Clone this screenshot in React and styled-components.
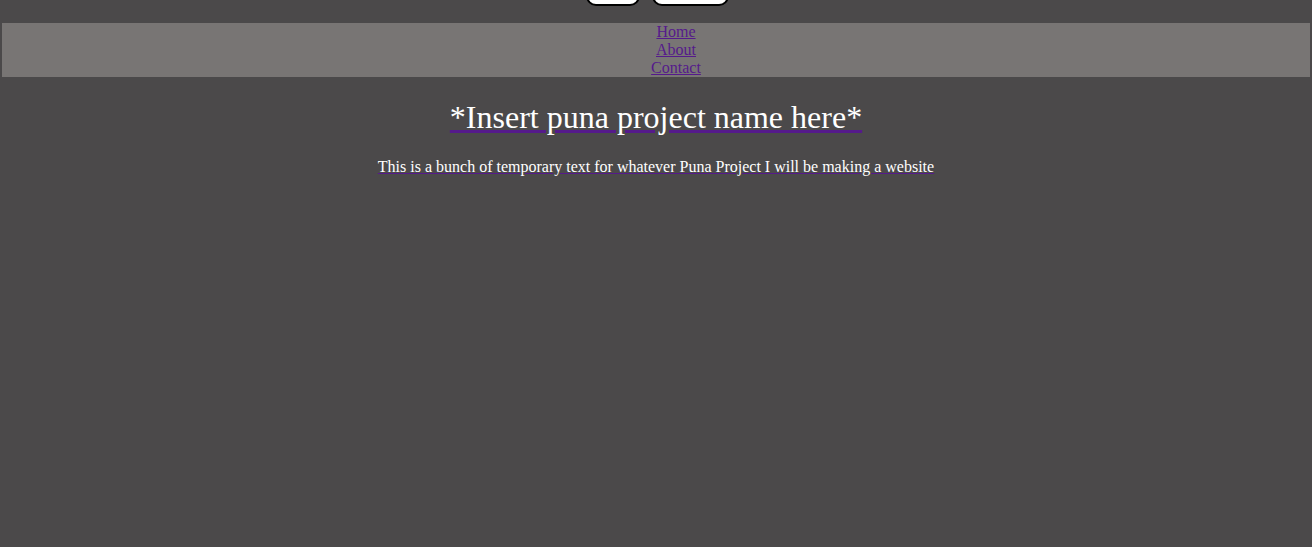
import React from "react";
import styled, { createGlobalStyle } from "styled-components";

const Global = createGlobalStyle`
  html, body { margin: 0; padding: 0; background: #4b494a; }
  body { font-family: "Liberation Serif", "Times New Roman", serif; font-size: 16px; }
`;

const Page = styled.div`
  padding: 0 2px;
  min-height: 547px;
  box-sizing: border-box;
`;

const ButtonRow = styled.div`
  display: flex;
  justify-content: center;
  gap: 12px;
  margin-top: -22px;
  padding-left: 3px;
`;

const TopButton = styled.button`
  width: ${(p) => p.$w}px;
  height: 28px;
  box-sizing: border-box;
  background: #ffffff;
  border: 2px solid #000000;
  border-radius: 10px;
  padding: 0;
`;

const Nav = styled.nav`
  margin-top: 17px;
  background: #787574;
`;

const NavList = styled.ul`
  list-style: none;
  margin: 0;
  padding: 0 0 0 40px;
  display: flex;
  flex-direction: column;
  align-items: center;
`;

const NavItem = styled.li`
  line-height: 18px;
`;

const NavLink = styled.a`
  font-size: 16px;
  color: #551a8b;
  text-decoration: underline;
`;

const Main = styled.a`
  display: block;
  text-align: center;
  color: #551a8b;
  text-decoration: underline;
`;

const Title = styled.h1`
  font-size: 32px;
  font-weight: normal;
  margin: 22px 0 22px;
  line-height: 37px;
  color: #ffffff;
  text-decoration-thickness: 3px;
`;

const Text = styled.p`
  margin: 0;
  font-size: 16px;
  line-height: 18px;
  color: #ffffff;
`;

export default function App() {
  return (
    <>
      <Global />
      <Page>
        <ButtonRow>
          <TopButton $w={54} />
          <TopButton $w={77} />
        </ButtonRow>
        <Nav>
          <NavList>
            <NavItem><NavLink href="#home">Home</NavLink></NavItem>
            <NavItem><NavLink href="#about">About</NavLink></NavItem>
            <NavItem><NavLink href="#contact">Contact</NavLink></NavItem>
          </NavList>
        </Nav>
        <Main href="#">
          <Title>*Insert puna project name here*</Title>
          <Text>This is a bunch of temporary text for whatever Puna Project I will be making a website</Text>
        </Main>
      </Page>
    </>
  );
}
